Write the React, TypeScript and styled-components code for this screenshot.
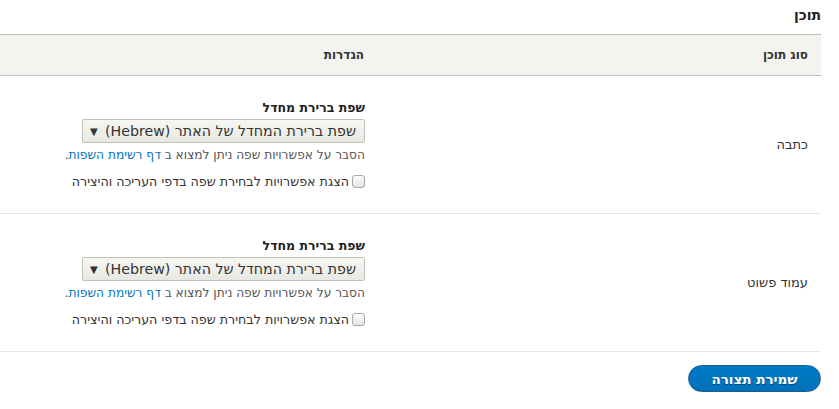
import React from "react";
import styled, { createGlobalStyle } from "styled-components";

const Global = createGlobalStyle`
  html, body { margin: 0; padding: 0; background: #fff; }
  body { font-family: "DejaVu Sans", "Noto Sans", sans-serif; color: #333; direction: rtl; }
`;

const Page = styled.div`
  padding: 0 18px 0 0;
  direction: rtl;
`;

const Title = styled.h2`
  margin: 0;
  height: 34px;
  padding-right: 0;
  font-size: 14px;
  font-weight: bold;
  color: #222;
  line-height: 30px;
`;

const Table = styled.div`
  display: grid;
  grid-template-columns: 444px 1fr;
`;

const HeadCell = styled.div`
  background: #f3f3ef;
  border-top: 1px solid #bfbfba;
  border-bottom: 1px solid #bfbfba;
  height: 40px;
  padding: 0 13px;
  display: flex;
  align-items: center;
  font-size: 12px;
  font-weight: bold;
  color: #333;
`;

const TypeCell = styled.div`
  border-bottom: 1px solid #e6e6e6;
  height: 137px;
  padding: 0 13px;
  display: flex;
  align-items: center;
  font-size: 13px;
  color: #333;
`;

const SettingsCell = styled.div`
  border-bottom: 1px solid #e6e6e6;
  height: 137px;
  padding: 0 12px;
  display: flex;
  flex-direction: column;
  justify-content: center;
  align-items: flex-start;
`;

const Label = styled.label`
  font-size: 12.5px;
  font-weight: bold;
  color: #222;
  margin-bottom: 4px;
`;

const Select = styled.div`
  box-sizing: border-box;
  width: 283px;
  height: 24px;
  border: 1px solid #c2c2bd;
  border-radius: 2px;
  background: linear-gradient(#f6f6f3, #e8e8e3);
  display: flex;
  align-items: center;
  justify-content: space-between;
  padding: 0 8px 0 7px;
  font-size: 14.2px;
  color: #333;
`;

const Arrow = styled.span`
  font-size: 10px;
  color: #333;
`;

const Description = styled.div`
  margin-top: 5px;
  font-size: 12.2px;
  color: #555;
`;

const Link = styled.a`
  color: #0074bd;
  text-decoration: none;
`;

const CheckRow = styled.label`
  margin-top: 12px;
  display: flex;
  align-items: center;
  font-size: 12.7px;
  color: #333;
`;

const Checkbox = styled.input`
  appearance: none;
  margin: 0 0 0 3px;
  width: 13px;
  height: 13px;
  border: 1px solid #a8a8a4;
  border-radius: 3px;
  background: linear-gradient(#fdfdfd, #e4e4e1);
`;

const Actions = styled.div`
  padding: 13px 0 0 0;
  display: flex;
`;

const Button = styled.button`
  width: 133px;
  height: 27px;
  border: 1px solid #1e5c90;
  border-radius: 20px;
  background: linear-gradient(#007bc6, #0071b8);
  color: #fff;
  font-family: "DejaVu Sans", sans-serif;
  font-weight: bold;
  font-size: 13.5px;
  text-shadow: 0 1px 0 rgba(0,0,0,0.4);
`;

const rows = ["כתבה", "עמוד פשוט"];

export default function App() {
  return (
    <Page>
      <Global />
      <Title>תוכן</Title>
      <Table>
        <HeadCell>סוג תוכן</HeadCell>
        <HeadCell>הגדרות</HeadCell>
        {rows.map((r) => (
          <React.Fragment key={r}>
            <TypeCell>{r}</TypeCell>
            <SettingsCell>
              <Label>שפת ברירת מחדל</Label>
              <Select>
                <span>שפת ברירת המחדל של האתר (Hebrew)</span>
                <Arrow>▼</Arrow>
              </Select>
              <Description>
                הסבר על אפשרויות שפה ניתן למצוא ב <Link href="#">דף רשימת השפות</Link>.
              </Description>
              <CheckRow>
                <Checkbox type="checkbox" />
                הצגת אפשרויות לבחירת שפה בדפי העריכה והיצירה
              </CheckRow>
            </SettingsCell>
          </React.Fragment>
        ))}
      </Table>
      <Actions>
        <Button>שמירת תצורה</Button>
      </Actions>
    </Page>
  );
}
